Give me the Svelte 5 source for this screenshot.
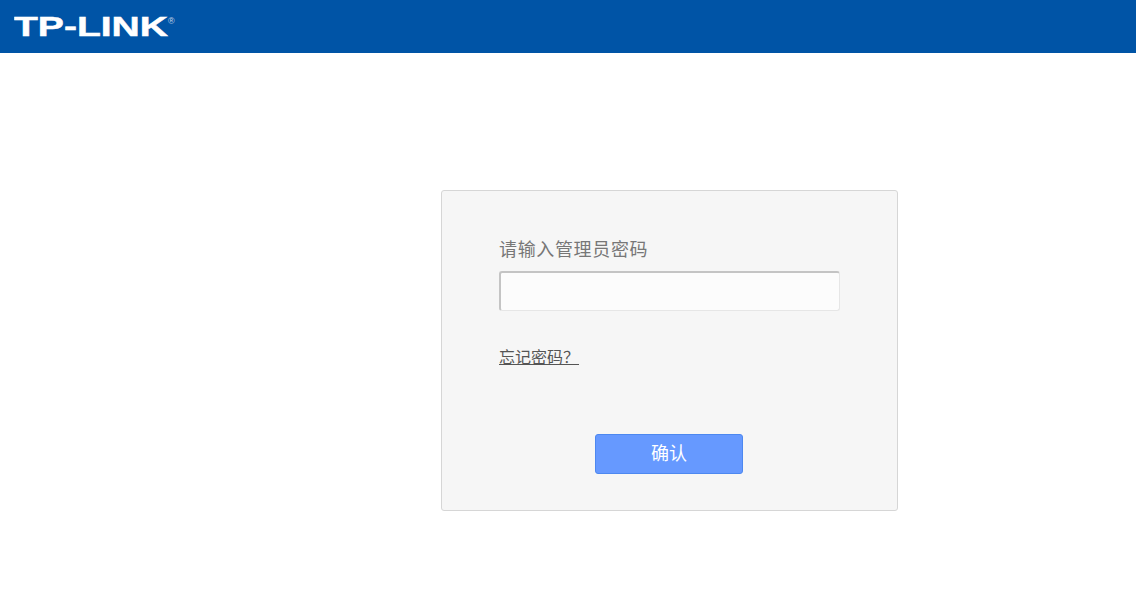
<script>
    let password = $state('');
</script>

<header class="top">
    <svg class="logo" width="164" height="30" viewBox="0 0 164 30" role="img" aria-label="TP-LINK">
        <text x="0" y="24" textLength="154" lengthAdjust="spacingAndGlyphs" class="logo-text">TP-LINK</text>
        <text x="154" y="12" class="logo-reg">®</text>
    </svg>
</header>

<main class="panel">
    <label class="label" for="pwd">请输入管理员密码</label>
    <input id="pwd" class="field" type="password" bind:value={password} />
    <a class="forgot" href="#forgot">忘记密码？</a>
    <div class="actions">
        <button class="confirm" type="button">确认</button>
    </div>
</main>

<style>
    :global(body) {
        background: #fff;
        font-family: "Noto Sans CJK SC", "Liberation Sans", sans-serif;
    }

    .top {
        height: 53px;
        background: #0054a6;
        display: flex;
        align-items: center;
        padding-left: 14px;
    }

    .logo {
        display: block;
    }

    .logo-text {
        font-family: "Liberation Sans", Arial, sans-serif;
        font-size: 28px;
        font-weight: 700;
        fill: #fff;
        stroke: #fff;
        stroke-width: 0.5px;
    }

    .logo-reg {
        font-family: "Liberation Sans", Arial, sans-serif;
        font-size: 9px;
        fill: #c4d4e8;
    }

    .panel {
        box-sizing: border-box;
        width: 457px;
        height: 321px;
        margin: 137px 0 0 441px;
        padding: 44px 57px 0;
        background: #f6f6f6;
        border: 1px solid #d6d6d6;
        border-radius: 3px;
    }

    .label {
        display: block;
        height: 26px;
        font-size: 18px;
        line-height: 26px;
        letter-spacing: 0.65px;
        color: #777;
    }

    .field {
        display: block;
        box-sizing: border-box;
        width: 341px;
        height: 40px;
        margin-top: 10px;
        padding: 0 8px;
        background: #fcfcfc;
        border: 1px solid #e6e6e6;
        border-top: 2px solid #c4c4c4;
        border-left: 2px solid #c4c4c4;
        border-radius: 3px;
        outline: none;
    }

    .forgot {
        display: inline-block;
        margin-top: 34px;
        font-size: 16px;
        line-height: 22px;
        color: #555;
        text-decoration: underline;
    }

    .actions {
        margin-top: 66px;
        padding-left: 96px;
    }

    .confirm {
        display: block;
        box-sizing: border-box;
        width: 148px;
        height: 40px;
        padding: 0 0 4px;
        background: #6699ff;
        border: 1px solid #4d88f0;
        border-radius: 3px;
        color: #fff;
        font-family: inherit;
        font-size: 18px;
        cursor: pointer;
    }
</style>
